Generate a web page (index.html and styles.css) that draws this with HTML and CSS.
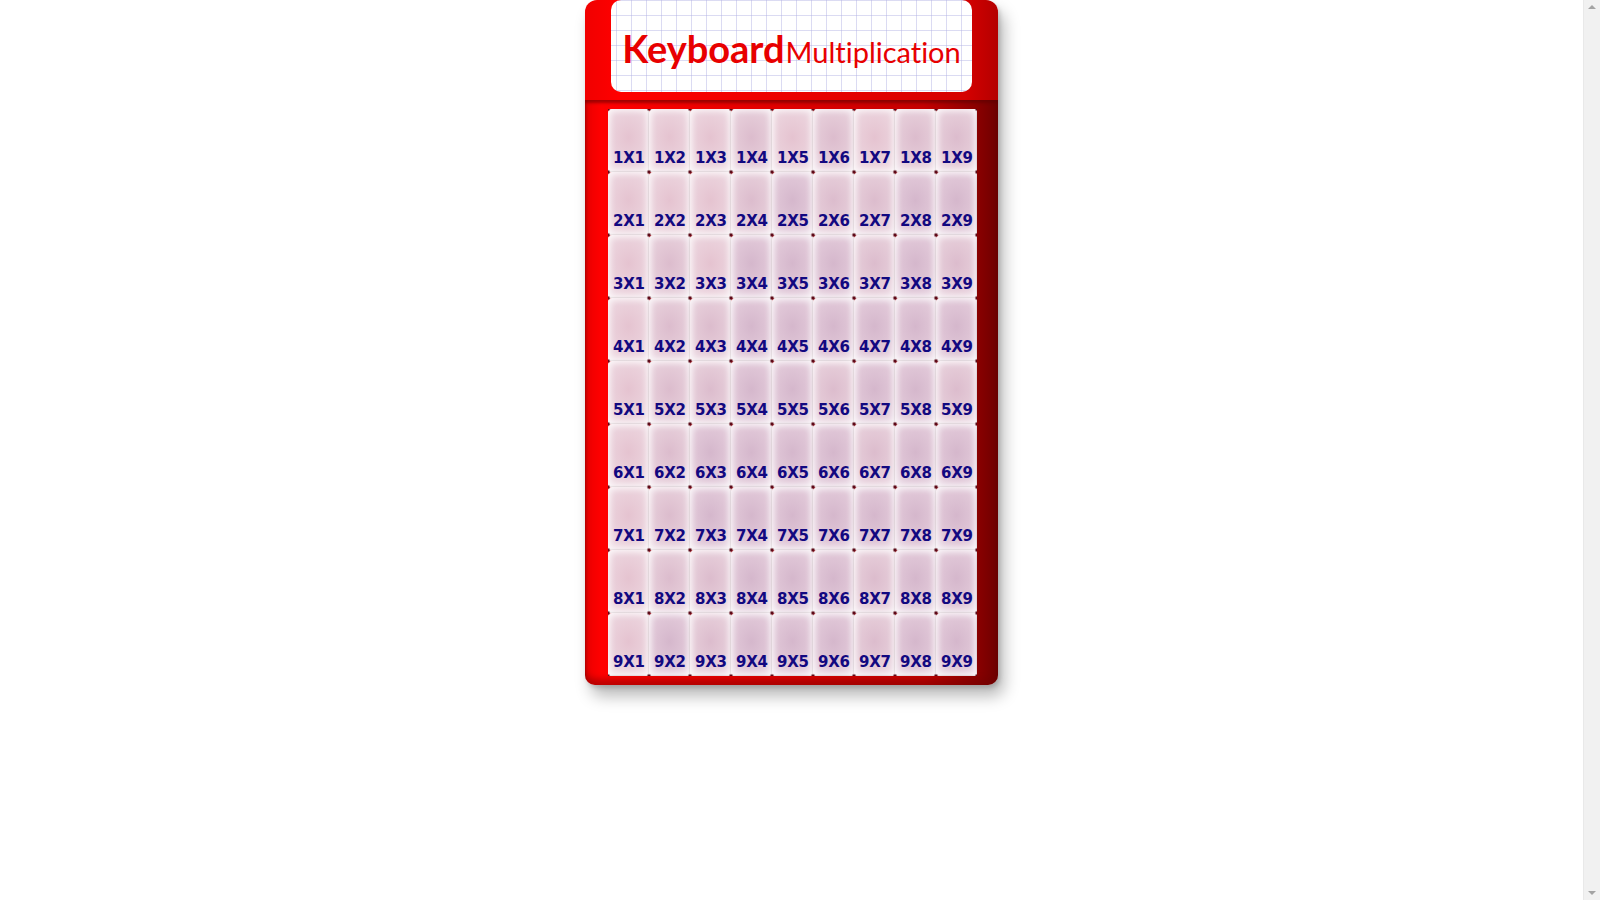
FILE: index.html
```html
<!DOCTYPE html>
<html>
<head>
<meta charset="utf-8">
<title>Keyboard Multiplication</title>
<link rel="stylesheet" href="styles.css">
</head>
<body>
<div class="page">
  <div class="device">
    <header class="top">
      <div class="screen">
        <h1 class="title"><span class="t-bold">Keyboard</span><span class="t-reg">Multiplication</span></h1>
      </div>
    </header>
    <main class="pad">
      <div class="keys">
        <div class="k v1">1X1</div><div class="k v1">1X2</div><div class="k v1">1X3</div><div class="k v2">1X4</div><div class="k v1">1X5</div><div class="k v2">1X6</div><div class="k v1">1X7</div><div class="k v2">1X8</div><div class="k v2">1X9</div>
        <div class="k v1">2X1</div><div class="k v1">2X2</div><div class="k v1">2X3</div><div class="k v2">2X4</div><div class="k v3">2X5</div><div class="k v2">2X6</div><div class="k v2">2X7</div><div class="k v3">2X8</div><div class="k v3">2X9</div>
        <div class="k v1">3X1</div><div class="k v2">3X2</div><div class="k v1">3X3</div><div class="k v3">3X4</div><div class="k v3">3X5</div><div class="k v3">3X6</div><div class="k v2">3X7</div><div class="k v3">3X8</div><div class="k v2">3X9</div>
        <div class="k v1">4X1</div><div class="k v2">4X2</div><div class="k v2">4X3</div><div class="k v3">4X4</div><div class="k v3">4X5</div><div class="k v3">4X6</div><div class="k v3">4X7</div><div class="k v3">4X8</div><div class="k v3">4X9</div>
        <div class="k v1">5X1</div><div class="k v2">5X2</div><div class="k v2">5X3</div><div class="k v3">5X4</div><div class="k v3">5X5</div><div class="k v2">5X6</div><div class="k v3">5X7</div><div class="k v3">5X8</div><div class="k v2">5X9</div>
        <div class="k v1">6X1</div><div class="k v2">6X2</div><div class="k v3">6X3</div><div class="k v3">6X4</div><div class="k v3">6X5</div><div class="k v3">6X6</div><div class="k v2">6X7</div><div class="k v3">6X8</div><div class="k v3">6X9</div>
        <div class="k v1">7X1</div><div class="k v2">7X2</div><div class="k v3">7X3</div><div class="k v3">7X4</div><div class="k v3">7X5</div><div class="k v3">7X6</div><div class="k v3">7X7</div><div class="k v3">7X8</div><div class="k v3">7X9</div>
        <div class="k v1">8X1</div><div class="k v2">8X2</div><div class="k v2">8X3</div><div class="k v3">8X4</div><div class="k v3">8X5</div><div class="k v3">8X6</div><div class="k v2">8X7</div><div class="k v3">8X8</div><div class="k v3">8X9</div>
        <div class="k v1">9X1</div><div class="k v3">9X2</div><div class="k v2">9X3</div><div class="k v3">9X4</div><div class="k v3">9X5</div><div class="k v3">9X6</div><div class="k v2">9X7</div><div class="k v3">9X8</div><div class="k v3">9X9</div>
      </div>
    </main>
  </div>
</div>
<div class="scrollbar">
  <span class="arrow up"></span>
  <span class="arrow down"></span>
</div>
</body>
</html>
```
FILE: styles.css
```css
html, body {
  margin: 0;
  padding: 0;
  background: #fff;
}
.page {
  padding: 0 17px 40px 0;
}
.scrollbar {
  position: fixed;
  top: 0;
  right: 0;
  width: 17px;
  height: 100vh;
  background: #f1f1f1;
  border-left: 1px solid #e9e9e9;
  box-sizing: border-box;
  display: flex;
  flex-direction: column;
  justify-content: space-between;
  align-items: center;
  padding: 5px 0;
}
.arrow {
  width: 0;
  height: 0;
  border-left: 4px solid transparent;
  border-right: 4px solid transparent;
}
.arrow.up { border-bottom: 4px solid #a3a3a3; }
.arrow.down { border-top: 4px solid #a3a3a3; }
.device {
  width: 413px;
  margin: 0 auto;
  border-radius: 12px 12px 10px 10px;
  box-shadow: 6px 11px 16px rgba(0,0,0,0.28), 2px 3px 4px rgba(0,0,0,0.15);
}
.top {
  height: 100px;
  box-sizing: border-box;
  padding: 0 26px;
  border-radius: 12px 12px 0 0;
  background: linear-gradient(90deg, #f00000 0%, #ff0000 8%, #e60000 60%, #d50000 92%, #b40000 100%);
}
.screen {
  height: 92px;
  border-radius: 10px;
  background-color: #fff;
  background-image:
    linear-gradient(90deg, rgba(175,175,228,0.45) 1px, transparent 1px),
    linear-gradient(0deg, rgba(175,175,228,0.45) 1px, transparent 1px);
  background-size: 15px 15px;
  background-position: 5px 1px;
  display: flex;
  justify-content: center;
}
.title {
  margin: 0;
  padding-top: 29px;
  line-height: 1;
  font-family: Lato, "Open Sans", sans-serif;
  color: #e80000;
  white-space: nowrap;
  font-variant-ligatures: none;
  display: flex;
  align-items: baseline;
  gap: 1px;
}
.t-bold { font-weight: 700; font-size: 38px; }
.t-reg { font-weight: 400; font-size: 29px; }
.pad {
  padding: 9px 21px 9px 23px;
  border-radius: 0 0 10px 10px;
  background: linear-gradient(90deg, #ea0000 0%, #ff0000 4%, #dd0000 50%, #c40000 82%, #8a0000 95%, #6e0000 100%);
  box-shadow: inset 0 3px 3px rgba(90,0,0,0.55), inset 0 -6px 6px rgba(110,0,0,0.45);
}
.keys {
  display: grid;
  grid-template-columns: repeat(9, 41px);
  grid-auto-rows: 63px;
  position: relative;
}
.keys::after {
  content: "";
  position: absolute;
  inset: 0;
  pointer-events: none;
  background-image: radial-gradient(circle, #5c0a18 1.4px, transparent 2.1px);
  background-size: 41px 63px;
  background-position: -20.5px -31.5px;
}
.k {
  box-sizing: border-box;
  display: flex;
  align-items: flex-end;
  padding: 0 0 5px 5px;
  font-family: "DejaVu Sans", Verdana, sans-serif;
  font-weight: 700;
  font-size: 15px;
  letter-spacing: -0.3px;
  color: #120880;
  border-radius: 4px 0 0 0;
  box-shadow: inset 0 0 6px 2px rgba(255,255,255,0.8), inset -1px -1px 1px rgba(110,85,95,0.35);
}
.v1 {
  background: radial-gradient(ellipse 80% 70% at 50% 45%, #e5c3d0 0%, #ebd2dc 60%, #f3e5eb 100%);
}
.v2 {
  background: radial-gradient(ellipse 80% 70% at 50% 45%, #dcbccd 0%, #e6cdd9 60%, #f1e4ec 100%);
}
.v3 {
  background: radial-gradient(ellipse 80% 70% at 50% 45%, #d5b7cc 0%, #e1c8d8 60%, #efe3ec 100%);
}
```
